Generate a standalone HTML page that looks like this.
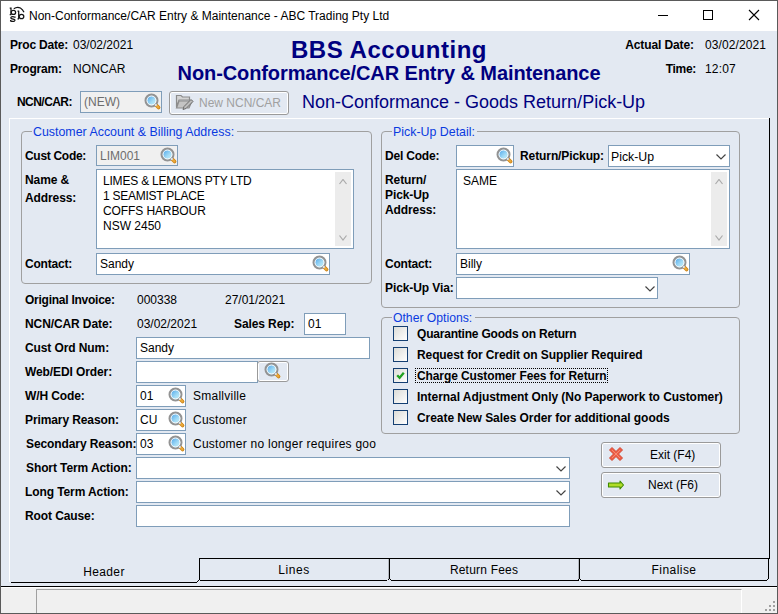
<!DOCTYPE html><html><head><meta charset="utf-8"><style>
html,body{margin:0;padding:0}
body{width:778px;height:614px;position:relative;overflow:hidden;background:#e3e9f2;font-family:"Liberation Sans",sans-serif}
.t{position:absolute;white-space:nowrap;line-height:1}
</style></head><body>
<div style="position:absolute;left:0px;top:0px;width:778px;height:31px;background:#fff"></div>
<svg style="position:absolute;left:0;top:0" width="30" height="30" viewBox="0 0 30 30" fill="none" stroke="#141414" stroke-width="1.25">
<path d="M11 7.6 V14.6 M9.7 8 H11.4 M9.7 14.6 H11.4"/><ellipse cx="13.4" cy="12.4" rx="2.2" ry="2.1"/>
<path d="M15 17.3 Q13.2 16.3 11.6 16.8 Q10.1 17.6 11.5 18.7 L14 19.3 Q15.7 20.2 14.4 21.1 Q12.4 21.9 10.6 20.9 M15 16.4 V17.8 M10.6 20 V21.5"/>
<path d="M18.7 10.8 V18.8 M17.5 11 H19.1 M17.5 18.8 H19.1"/><ellipse cx="21.5" cy="16.5" rx="2.3" ry="2.2"/>
<path d="M13.8 8.8 Q17 6.4 20.4 8 Q22.8 9.4 24 12.3"/>
</svg>
<div class="t" style="left:29px;top:10px;font-size:12px;font-weight:normal;color:#000;">Non-Conformance/CAR Entry &amp; Maintenance - ABC Trading Pty Ltd</div>
<div style="position:absolute;left:658px;top:15px;width:10px;height:1px;background:#000"></div>
<div style="position:absolute;left:703px;top:10px;width:8px;height:8px;border:1px solid #000"></div>
<svg style="position:absolute;left:748px;top:9px" width="12" height="12" viewBox="0 0 12 12"><path d="M1 1 L11 11 M11 1 L1 11" stroke="#000" stroke-width="1.1"/></svg>
<div class="t" style="left:10px;top:39px;font-size:12px;font-weight:bold;color:#000;letter-spacing:-0.2px;">Proc Date:</div>
<div class="t" style="left:73px;top:39px;font-size:12px;font-weight:normal;color:#000;">03/02/2021</div>
<div class="t" style="left:10px;top:63px;font-size:12px;font-weight:bold;color:#000;letter-spacing:-0.2px;">Program:</div>
<div class="t" style="left:73px;top:63px;font-size:12px;font-weight:normal;color:#000;letter-spacing:0.1px;">NONCAR</div>
<div class="t" style="left:89px;width:600px;text-align:center;top:38px;font-size:24px;font-weight:bold;color:#000080;letter-spacing:0.55px;">BBS Accounting</div>
<div class="t" style="left:89px;width:600px;text-align:center;top:63px;font-size:20px;font-weight:bold;color:#000080;letter-spacing:-0.1px;">Non-Conformance/CAR Entry &amp; Maintenance</div>
<div class="t" style="right:84px;top:39px;font-size:12px;font-weight:bold;color:#000;letter-spacing:-0.1px;">Actual Date:</div>
<div class="t" style="left:705px;top:39px;font-size:12px;font-weight:normal;color:#000;letter-spacing:0.1px;">03/02/2021</div>
<div class="t" style="right:82px;top:63px;font-size:12px;font-weight:bold;color:#000;letter-spacing:-0.3px;">Time:</div>
<div class="t" style="left:705px;top:63px;font-size:12px;font-weight:normal;color:#000;letter-spacing:0.15px;">12:07</div>
<div class="t" style="left:17px;top:96px;font-size:12px;font-weight:bold;color:#000;letter-spacing:-0.55px;">NCN/CAR:</div>
<div style="position:absolute;left:80px;top:91px;width:80px;height:20px;border:1px solid #7f9db9;background:#f0f0f0"></div>
<div class="t" style="left:84px;top:96px;font-size:12px;font-weight:normal;color:#6d6d6d;">(NEW)</div>
<svg style="position:absolute;left:144px;top:93px" width="18" height="18" viewBox="0 0 18 18">
<defs><linearGradient id="lg144_93" x1="0.1" y1="0.1" x2="0.9" y2="0.9"><stop offset="0" stop-color="#4aa4ea"/><stop offset="0.6" stop-color="#a4dcf6"/><stop offset="1" stop-color="#c4f2fc"/></linearGradient></defs>
<path d="M11.8 11.8 L14.6 14.6" stroke="#c98218" stroke-width="3.6" stroke-linecap="round"/>
<path d="M12 12 L14.4 14.4" stroke="#eba838" stroke-width="2.2" stroke-linecap="round"/>
<circle cx="7.5" cy="7.5" r="5.9" fill="url(#lg144_93)" stroke="#939393" stroke-width="2.2"/>
<circle cx="7.5" cy="7.5" r="4.5" fill="none" stroke="#fbfbfb" stroke-width="1"/>
<circle cx="11.9" cy="11.9" r="1" fill="#e8eef4"/>
</svg>
<div style="position:absolute;left:169px;top:91px;width:116px;height:20px;border:1px solid #9a9a9a;border-radius:3px;box-shadow:inset 0 0 0 1px #fff;padding:1px"></div>
<svg style="position:absolute;left:175px;top:94px" width="19" height="17" viewBox="0 0 19 17">
<path d="M1.5 1.5 L6 1.5 L7.5 3 L14.5 3 L14.5 6 L4 6 L1.5 13 Z" fill="#d4d4d4" stroke="#8c8c8c" stroke-width="1.2"/>
<path d="M1.5 14 L4 7 L17 7 L14 14 Z" fill="#c4c4c4" stroke="#8c8c8c" stroke-width="1.2"/>
<path d="M8 15.5 L9 12.5 L16 5.5 L18 7.5 L11 14.5 Z" fill="#bdbdbd" stroke="#6c6c6c" stroke-width="1"/>
</svg>
<div class="t" style="left:199px;top:97px;font-size:12px;font-weight:normal;color:#a0a0a0;">New NCN/CAR</div>
<div class="t" style="left:302px;top:93px;font-size:18px;font-weight:normal;color:#000080;">Non-Conformance - Goods Return/Pick-Up</div>
<div style="position:absolute;left:9px;top:118px;width:760px;height:1px;background:#fff"></div>
<div style="position:absolute;left:9px;top:118px;width:1px;height:464px;background:#fff"></div>
<div style="position:absolute;left:769px;top:118px;width:1px;height:441px;background:#000"></div>
<div style="position:absolute;left:199px;top:558px;width:571px;height:1px;background:#000"></div>
<div style="position:absolute;left:21px;top:131px;width:349px;height:151px;border:1px solid #a0a0a0;border-radius:4px"></div>
<div style="position:absolute;left:32px;top:129px;width:205px;height:5px;background:#e3e9f2"></div>
<div class="t" style="left:33px;top:126px;font-size:12.4px;font-weight:normal;color:#0a3ae0;">Customer Account &amp; Billing Address:</div>
<div class="t" style="left:25px;top:150px;font-size:12px;font-weight:bold;color:#000;letter-spacing:-0.3px;">Cust Code:</div>
<div style="position:absolute;left:96px;top:145px;width:80px;height:19px;border:1px solid #7f9db9;background:#f0f0f0"></div>
<div class="t" style="left:100px;top:150px;font-size:12px;font-weight:normal;color:#6d6d6d;">LIM001</div>
<svg style="position:absolute;left:160px;top:147px" width="18" height="18" viewBox="0 0 18 18">
<defs><linearGradient id="lg160_147" x1="0.1" y1="0.1" x2="0.9" y2="0.9"><stop offset="0" stop-color="#4aa4ea"/><stop offset="0.6" stop-color="#a4dcf6"/><stop offset="1" stop-color="#c4f2fc"/></linearGradient></defs>
<path d="M11.8 11.8 L14.6 14.6" stroke="#c98218" stroke-width="3.6" stroke-linecap="round"/>
<path d="M12 12 L14.4 14.4" stroke="#eba838" stroke-width="2.2" stroke-linecap="round"/>
<circle cx="7.5" cy="7.5" r="5.9" fill="url(#lg160_147)" stroke="#939393" stroke-width="2.2"/>
<circle cx="7.5" cy="7.5" r="4.5" fill="none" stroke="#fbfbfb" stroke-width="1"/>
<circle cx="11.9" cy="11.9" r="1" fill="#e8eef4"/>
</svg>
<div class="t" style="left:25px;top:174px;font-size:12px;font-weight:bold;color:#000;letter-spacing:-0.1px;">Name &amp;</div>
<div class="t" style="left:25px;top:192px;font-size:12px;font-weight:bold;color:#000;letter-spacing:-0.1px;">Address:</div>
<div style="position:absolute;left:96px;top:169px;width:256px;height:78px;border:1px solid #7f9db9;background:#fff"></div>
<div style="position:absolute;left:335px;top:172px;width:16px;height:74px;background:#ececec"></div>
<svg style="position:absolute;left:339px;top:179px" width="8" height="6" viewBox="0 0 8 6"><path d="M0.5 5 L4.0 0.5 L7.5 5" fill="none" stroke="#aaaaaa" stroke-width="1.2"/></svg>
<svg style="position:absolute;left:339px;top:235px" width="8" height="6" viewBox="0 0 8 6"><path d="M0.5 0.5 L4.0 5 L7.5 0.5" fill="none" stroke="#aaaaaa" stroke-width="1.2"/></svg>
<div class="t" style="left:103px;top:175px;font-size:12px;font-weight:normal;color:#000;letter-spacing:-0.2px;">LIMES &amp; LEMONS PTY LTD</div>
<div class="t" style="left:103px;top:190px;font-size:12px;font-weight:normal;color:#000;letter-spacing:-0.25px;">1 SEAMIST PLACE</div>
<div class="t" style="left:103px;top:205px;font-size:12px;font-weight:normal;color:#000;letter-spacing:-0.1px;">COFFS HARBOUR</div>
<div class="t" style="left:103px;top:220px;font-size:12px;font-weight:normal;color:#000;">NSW 2450</div>
<div class="t" style="left:25px;top:258px;font-size:12px;font-weight:bold;color:#000;letter-spacing:-0.2px;">Contact:</div>
<div style="position:absolute;left:96px;top:253px;width:232px;height:20px;border:1px solid #7f9db9;background:#fff"></div>
<div class="t" style="left:100px;top:258px;font-size:12px;font-weight:normal;color:#000;">Sandy</div>
<svg style="position:absolute;left:312px;top:255px" width="18" height="18" viewBox="0 0 18 18">
<defs><linearGradient id="lg312_255" x1="0.1" y1="0.1" x2="0.9" y2="0.9"><stop offset="0" stop-color="#4aa4ea"/><stop offset="0.6" stop-color="#a4dcf6"/><stop offset="1" stop-color="#c4f2fc"/></linearGradient></defs>
<path d="M11.8 11.8 L14.6 14.6" stroke="#c98218" stroke-width="3.6" stroke-linecap="round"/>
<path d="M12 12 L14.4 14.4" stroke="#eba838" stroke-width="2.2" stroke-linecap="round"/>
<circle cx="7.5" cy="7.5" r="5.9" fill="url(#lg312_255)" stroke="#939393" stroke-width="2.2"/>
<circle cx="7.5" cy="7.5" r="4.5" fill="none" stroke="#fbfbfb" stroke-width="1"/>
<circle cx="11.9" cy="11.9" r="1" fill="#e8eef4"/>
</svg>
<div style="position:absolute;left:381px;top:131px;width:357px;height:175px;border:1px solid #a0a0a0;border-radius:4px"></div>
<div style="position:absolute;left:392px;top:129px;width:85px;height:5px;background:#e3e9f2"></div>
<div class="t" style="left:393px;top:126px;font-size:12.4px;font-weight:normal;color:#0a3ae0;">Pick-Up Detail:</div>
<div class="t" style="left:385px;top:150px;font-size:12px;font-weight:bold;color:#000;letter-spacing:-0.2px;">Del Code:</div>
<div style="position:absolute;left:456px;top:145px;width:56px;height:20px;border:1px solid #7f9db9;background:#fff"></div>
<svg style="position:absolute;left:496px;top:147px" width="18" height="18" viewBox="0 0 18 18">
<defs><linearGradient id="lg496_147" x1="0.1" y1="0.1" x2="0.9" y2="0.9"><stop offset="0" stop-color="#4aa4ea"/><stop offset="0.6" stop-color="#a4dcf6"/><stop offset="1" stop-color="#c4f2fc"/></linearGradient></defs>
<path d="M11.8 11.8 L14.6 14.6" stroke="#c98218" stroke-width="3.6" stroke-linecap="round"/>
<path d="M12 12 L14.4 14.4" stroke="#eba838" stroke-width="2.2" stroke-linecap="round"/>
<circle cx="7.5" cy="7.5" r="5.9" fill="url(#lg496_147)" stroke="#939393" stroke-width="2.2"/>
<circle cx="7.5" cy="7.5" r="4.5" fill="none" stroke="#fbfbfb" stroke-width="1"/>
<circle cx="11.9" cy="11.9" r="1" fill="#e8eef4"/>
</svg>
<div class="t" style="right:174px;top:150px;font-size:12px;font-weight:bold;color:#000;letter-spacing:-0.1px;">Return/Pickup:</div>
<div style="position:absolute;left:608px;top:145px;width:120px;height:20px;border:1px solid #7f9db9;background:#fff"></div>
<div class="t" style="left:611px;top:151px;font-size:12.3px;font-weight:normal;color:#000;">Pick-Up</div>
<svg style="position:absolute;left:716px;top:154px" width="10" height="6" viewBox="0 0 10 6"><path d="M0.5 0.5 L5.0 5 L9.5 0.5" fill="none" stroke="#444" stroke-width="1.2"/></svg>
<div class="t" style="left:385px;top:174px;font-size:12px;font-weight:bold;color:#000;letter-spacing:-0.1px;">Return/</div>
<div class="t" style="left:385px;top:189px;font-size:12px;font-weight:bold;color:#000;letter-spacing:-0.1px;">Pick-Up</div>
<div class="t" style="left:385px;top:204px;font-size:12px;font-weight:bold;color:#000;letter-spacing:-0.1px;">Address:</div>
<div style="position:absolute;left:456px;top:169px;width:272px;height:78px;border:1px solid #7f9db9;background:#fff"></div>
<div style="position:absolute;left:711px;top:172px;width:16px;height:74px;background:#ececec"></div>
<svg style="position:absolute;left:715px;top:179px" width="8" height="6" viewBox="0 0 8 6"><path d="M0.5 5 L4.0 0.5 L7.5 5" fill="none" stroke="#aaaaaa" stroke-width="1.2"/></svg>
<svg style="position:absolute;left:715px;top:235px" width="8" height="6" viewBox="0 0 8 6"><path d="M0.5 0.5 L4.0 5 L7.5 0.5" fill="none" stroke="#aaaaaa" stroke-width="1.2"/></svg>
<div class="t" style="left:463px;top:175px;font-size:12px;font-weight:normal;color:#000;">SAME</div>
<div class="t" style="left:385px;top:258px;font-size:12px;font-weight:bold;color:#000;letter-spacing:-0.2px;">Contact:</div>
<div style="position:absolute;left:456px;top:253px;width:232px;height:20px;border:1px solid #7f9db9;background:#fff"></div>
<div class="t" style="left:460px;top:258px;font-size:12px;font-weight:normal;color:#000;">Billy</div>
<svg style="position:absolute;left:672px;top:255px" width="18" height="18" viewBox="0 0 18 18">
<defs><linearGradient id="lg672_255" x1="0.1" y1="0.1" x2="0.9" y2="0.9"><stop offset="0" stop-color="#4aa4ea"/><stop offset="0.6" stop-color="#a4dcf6"/><stop offset="1" stop-color="#c4f2fc"/></linearGradient></defs>
<path d="M11.8 11.8 L14.6 14.6" stroke="#c98218" stroke-width="3.6" stroke-linecap="round"/>
<path d="M12 12 L14.4 14.4" stroke="#eba838" stroke-width="2.2" stroke-linecap="round"/>
<circle cx="7.5" cy="7.5" r="5.9" fill="url(#lg672_255)" stroke="#939393" stroke-width="2.2"/>
<circle cx="7.5" cy="7.5" r="4.5" fill="none" stroke="#fbfbfb" stroke-width="1"/>
<circle cx="11.9" cy="11.9" r="1" fill="#e8eef4"/>
</svg>
<div class="t" style="left:385px;top:282px;font-size:12px;font-weight:bold;color:#000;letter-spacing:-0.1px;">Pick-Up Via:</div>
<div style="position:absolute;left:456px;top:277px;width:200px;height:20px;border:1px solid #7f9db9;background:#fff"></div>
<svg style="position:absolute;left:645px;top:286px" width="10" height="6" viewBox="0 0 10 6"><path d="M0.5 0.5 L5.0 5 L9.5 0.5" fill="none" stroke="#444" stroke-width="1.2"/></svg>
<div style="position:absolute;left:381px;top:317px;width:357px;height:115px;border:1px solid #a0a0a0;border-radius:4px"></div>
<div style="position:absolute;left:392px;top:315px;width:83px;height:5px;background:#e3e9f2"></div>
<div class="t" style="left:393px;top:312px;font-size:12.2px;font-weight:normal;color:#0a3ae0;">Other Options:</div>
<div style="position:absolute;left:393px;top:326px;width:13px;height:13px;border:1px solid #143f72;background:linear-gradient(135deg,#dcdcd7,#ffffff)"></div>
<div class="t" style="left:417px;top:328px;font-size:12px;font-weight:bold;color:#000;letter-spacing:-0.2px;">Quarantine Goods on Return</div>
<div style="position:absolute;left:393px;top:347px;width:13px;height:13px;border:1px solid #143f72;background:linear-gradient(135deg,#dcdcd7,#ffffff)"></div>
<div class="t" style="left:417px;top:349px;font-size:12px;font-weight:bold;color:#000;letter-spacing:-0.1px;">Request for Credit on Supplier Required</div>
<div style="position:absolute;left:393px;top:368px;width:13px;height:13px;border:1px solid #143f72;background:linear-gradient(135deg,#dcdcd7,#ffffff)"></div>
<svg style="position:absolute;left:393px;top:368px" width="15" height="15" viewBox="0 0 15 15"><path d="M4.2 7.3 L6.6 9.8 L10.8 4.8" fill="none" stroke="#21a121" stroke-width="2.3"/></svg>
<div class="t" style="left:417px;top:370px;font-size:12px;font-weight:bold;color:#000;letter-spacing:-0.1px;">Charge Customer Fees for Return</div>
<div style="position:absolute;left:393px;top:389px;width:13px;height:13px;border:1px solid #143f72;background:linear-gradient(135deg,#dcdcd7,#ffffff)"></div>
<div class="t" style="left:417px;top:391px;font-size:12px;font-weight:bold;color:#000;letter-spacing:-0.05px;">Internal Adjustment Only (No Paperwork to Customer)</div>
<div style="position:absolute;left:393px;top:410px;width:13px;height:13px;border:1px solid #143f72;background:linear-gradient(135deg,#dcdcd7,#ffffff)"></div>
<div class="t" style="left:417px;top:412px;font-size:12px;font-weight:bold;color:#000;letter-spacing:-0.05px;">Create New Sales Order for additional goods</div>
<div style="position:absolute;left:415px;top:368px;width:191px;height:13px;border:1px dotted #000"></div>
<div class="t" style="left:25px;top:294px;font-size:12px;font-weight:bold;color:#000;letter-spacing:-0.25px;">Original Invoice:</div>
<div class="t" style="left:137px;top:294px;font-size:12px;font-weight:normal;color:#000;">000338</div>
<div class="t" style="left:225px;top:294px;font-size:12px;font-weight:normal;color:#000;">27/01/2021</div>
<div class="t" style="left:25px;top:318px;font-size:12px;font-weight:bold;color:#000;letter-spacing:-0.1px;">NCN/CAR Date:</div>
<div class="t" style="left:137px;top:318px;font-size:12px;font-weight:normal;color:#000;">03/02/2021</div>
<div class="t" style="left:234px;top:318px;font-size:12px;font-weight:bold;color:#000;letter-spacing:-0.1px;">Sales Rep:</div>
<div style="position:absolute;left:304px;top:313px;width:40px;height:20px;border:1px solid #7f9db9;background:#fff"></div>
<div class="t" style="left:308px;top:318px;font-size:12px;font-weight:normal;color:#000;">01</div>
<div class="t" style="left:25px;top:342px;font-size:12px;font-weight:bold;color:#000;letter-spacing:-0.1px;">Cust Ord Num:</div>
<div style="position:absolute;left:136px;top:337px;width:232px;height:20px;border:1px solid #7f9db9;background:#fff"></div>
<div class="t" style="left:140px;top:342px;font-size:12px;font-weight:normal;color:#000;">Sandy</div>
<div class="t" style="left:25px;top:366px;font-size:12px;font-weight:bold;color:#000;letter-spacing:-0.1px;">Web/EDI Order:</div>
<div style="position:absolute;left:136px;top:361px;width:120px;height:20px;border:1px solid #7f9db9;background:#fff"></div>
<div style="position:absolute;left:257px;top:361px;width:28px;height:17px;border:1px solid #9a9a9a;border-radius:3px;box-shadow:inset 0 0 0 1px #fff;padding:1px"></div>
<svg style="position:absolute;left:264px;top:362px" width="18" height="18" viewBox="0 0 18 18">
<defs><linearGradient id="lg264_362" x1="0.1" y1="0.1" x2="0.9" y2="0.9"><stop offset="0" stop-color="#4aa4ea"/><stop offset="0.6" stop-color="#a4dcf6"/><stop offset="1" stop-color="#c4f2fc"/></linearGradient></defs>
<path d="M11.8 11.8 L14.6 14.6" stroke="#c98218" stroke-width="3.6" stroke-linecap="round"/>
<path d="M12 12 L14.4 14.4" stroke="#eba838" stroke-width="2.2" stroke-linecap="round"/>
<circle cx="7.5" cy="7.5" r="5.9" fill="url(#lg264_362)" stroke="#939393" stroke-width="2.2"/>
<circle cx="7.5" cy="7.5" r="4.5" fill="none" stroke="#fbfbfb" stroke-width="1"/>
<circle cx="11.9" cy="11.9" r="1" fill="#e8eef4"/>
</svg>
<div class="t" style="left:25px;top:390px;font-size:12px;font-weight:bold;color:#000;letter-spacing:-0.1px;">W/H Code:</div>
<div style="position:absolute;left:136px;top:385px;width:48px;height:20px;border:1px solid #7f9db9;background:#fff"></div>
<div class="t" style="left:140px;top:390px;font-size:12px;font-weight:normal;color:#000;">01</div>
<svg style="position:absolute;left:168px;top:387px" width="18" height="18" viewBox="0 0 18 18">
<defs><linearGradient id="lg168_387" x1="0.1" y1="0.1" x2="0.9" y2="0.9"><stop offset="0" stop-color="#4aa4ea"/><stop offset="0.6" stop-color="#a4dcf6"/><stop offset="1" stop-color="#c4f2fc"/></linearGradient></defs>
<path d="M11.8 11.8 L14.6 14.6" stroke="#c98218" stroke-width="3.6" stroke-linecap="round"/>
<path d="M12 12 L14.4 14.4" stroke="#eba838" stroke-width="2.2" stroke-linecap="round"/>
<circle cx="7.5" cy="7.5" r="5.9" fill="url(#lg168_387)" stroke="#939393" stroke-width="2.2"/>
<circle cx="7.5" cy="7.5" r="4.5" fill="none" stroke="#fbfbfb" stroke-width="1"/>
<circle cx="11.9" cy="11.9" r="1" fill="#e8eef4"/>
</svg>
<div class="t" style="left:193px;top:390px;font-size:12px;font-weight:normal;color:#000;letter-spacing:0.25px;">Smallville</div>
<div class="t" style="left:25px;top:414px;font-size:12px;font-weight:bold;color:#000;letter-spacing:-0.1px;">Primary Reason:</div>
<div style="position:absolute;left:136px;top:409px;width:48px;height:20px;border:1px solid #7f9db9;background:#fff"></div>
<div class="t" style="left:140px;top:414px;font-size:12px;font-weight:normal;color:#000;">CU</div>
<svg style="position:absolute;left:168px;top:411px" width="18" height="18" viewBox="0 0 18 18">
<defs><linearGradient id="lg168_411" x1="0.1" y1="0.1" x2="0.9" y2="0.9"><stop offset="0" stop-color="#4aa4ea"/><stop offset="0.6" stop-color="#a4dcf6"/><stop offset="1" stop-color="#c4f2fc"/></linearGradient></defs>
<path d="M11.8 11.8 L14.6 14.6" stroke="#c98218" stroke-width="3.6" stroke-linecap="round"/>
<path d="M12 12 L14.4 14.4" stroke="#eba838" stroke-width="2.2" stroke-linecap="round"/>
<circle cx="7.5" cy="7.5" r="5.9" fill="url(#lg168_411)" stroke="#939393" stroke-width="2.2"/>
<circle cx="7.5" cy="7.5" r="4.5" fill="none" stroke="#fbfbfb" stroke-width="1"/>
<circle cx="11.9" cy="11.9" r="1" fill="#e8eef4"/>
</svg>
<div class="t" style="left:193px;top:414px;font-size:12px;font-weight:normal;color:#000;letter-spacing:0.25px;">Customer</div>
<div class="t" style="left:26px;top:438px;font-size:12px;font-weight:bold;color:#000;letter-spacing:-0.1px;">Secondary Reason:</div>
<div style="position:absolute;left:136px;top:433px;width:48px;height:20px;border:1px solid #7f9db9;background:#fff"></div>
<div class="t" style="left:140px;top:438px;font-size:12px;font-weight:normal;color:#000;">03</div>
<svg style="position:absolute;left:168px;top:435px" width="18" height="18" viewBox="0 0 18 18">
<defs><linearGradient id="lg168_435" x1="0.1" y1="0.1" x2="0.9" y2="0.9"><stop offset="0" stop-color="#4aa4ea"/><stop offset="0.6" stop-color="#a4dcf6"/><stop offset="1" stop-color="#c4f2fc"/></linearGradient></defs>
<path d="M11.8 11.8 L14.6 14.6" stroke="#c98218" stroke-width="3.6" stroke-linecap="round"/>
<path d="M12 12 L14.4 14.4" stroke="#eba838" stroke-width="2.2" stroke-linecap="round"/>
<circle cx="7.5" cy="7.5" r="5.9" fill="url(#lg168_435)" stroke="#939393" stroke-width="2.2"/>
<circle cx="7.5" cy="7.5" r="4.5" fill="none" stroke="#fbfbfb" stroke-width="1"/>
<circle cx="11.9" cy="11.9" r="1" fill="#e8eef4"/>
</svg>
<div class="t" style="left:193px;top:438px;font-size:12px;font-weight:normal;color:#000;letter-spacing:0.25px;">Customer no longer requires goo</div>
<div class="t" style="left:26px;top:462px;font-size:12px;font-weight:bold;color:#000;letter-spacing:-0.1px;">Short Term Action:</div>
<div style="position:absolute;left:136px;top:457px;width:432px;height:20px;border:1px solid #7f9db9;background:#fff"></div>
<svg style="position:absolute;left:556px;top:466px" width="10" height="6" viewBox="0 0 10 6"><path d="M0.5 0.5 L5.0 5 L9.5 0.5" fill="none" stroke="#444" stroke-width="1.2"/></svg>
<div class="t" style="left:25px;top:486px;font-size:12px;font-weight:bold;color:#000;letter-spacing:-0.1px;">Long Term Action:</div>
<div style="position:absolute;left:136px;top:481px;width:432px;height:20px;border:1px solid #7f9db9;background:#fff"></div>
<svg style="position:absolute;left:556px;top:490px" width="10" height="6" viewBox="0 0 10 6"><path d="M0.5 0.5 L5.0 5 L9.5 0.5" fill="none" stroke="#444" stroke-width="1.2"/></svg>
<div class="t" style="left:25px;top:510px;font-size:12px;font-weight:bold;color:#000;letter-spacing:-0.1px;">Root Cause:</div>
<div style="position:absolute;left:136px;top:505px;width:432px;height:20px;border:1px solid #7f9db9;background:#fff"></div>
<div style="position:absolute;left:601px;top:442px;width:116px;height:22px;border:1px solid #9a9a9a;border-radius:3px;box-shadow:inset 0 0 0 1px #fff;padding:1px"></div>
<svg style="position:absolute;left:608px;top:446px" width="16" height="16" viewBox="0 0 16 16"><path d="M1.5 4 L4 1.5 L8 5.5 L12 1.5 L14.5 4 L10.5 8 L14.5 12 L12 14.5 L8 10.5 L4 14.5 L1.5 12 L5.5 8 Z" fill="#ef5c45" stroke="#d24a34" stroke-width="1"/><path d="M4 4 L12 12 M12 4 L4 12" stroke="#f68a72" stroke-width="1"/></svg>
<div class="t" style="left:650px;top:449px;font-size:12px;font-weight:normal;color:#000;">Exit (F4)</div>
<div style="position:absolute;left:601px;top:472px;width:116px;height:22px;border:1px solid #9a9a9a;border-radius:3px;box-shadow:inset 0 0 0 1px #fff;padding:1px"></div>
<svg style="position:absolute;left:607px;top:479px" width="18" height="12" viewBox="0 0 18 12"><path d="M1.5 4 L13 4 L13 2 L16.5 6 L13 10 L13 8 L1.5 8 Z" fill="#b0dc28" stroke="#3f8a00" stroke-width="1.1" stroke-linejoin="round"/></svg>
<div class="t" style="left:648px;top:479px;font-size:12px;font-weight:normal;color:#000;">Next (F6)</div>
<div style="position:absolute;left:11px;top:582px;width:186px;height:1px;background:#000"></div>
<div style="position:absolute;left:197px;top:581px;width:1px;height:1px;background:#000"></div>
<div style="position:absolute;left:198px;top:580px;width:1px;height:1px;background:#000"></div>
<div style="position:absolute;left:199px;top:558px;width:1px;height:22px;background:#000"></div>
<div style="position:absolute;left:200px;top:580px;width:187px;height:1px;background:#000"></div>
<div style="position:absolute;left:389px;top:558px;width:1px;height:21px;background:#000"></div>
<div style="position:absolute;left:388px;top:559px;width:1px;height:20px;background:#b4b8c0"></div>
<div style="position:absolute;left:388px;top:579px;width:1px;height:1px;background:#000"></div>
<div style="position:absolute;left:390px;top:579px;width:1px;height:1px;background:#000"></div>
<div style="position:absolute;left:391px;top:580px;width:188px;height:1px;background:#000"></div>
<div style="position:absolute;left:579px;top:558px;width:1px;height:21px;background:#000"></div>
<div style="position:absolute;left:578px;top:559px;width:1px;height:20px;background:#b4b8c0"></div>
<div style="position:absolute;left:578px;top:579px;width:1px;height:1px;background:#000"></div>
<div style="position:absolute;left:580px;top:579px;width:1px;height:1px;background:#000"></div>
<div style="position:absolute;left:581px;top:580px;width:186px;height:1px;background:#000"></div>
<div style="position:absolute;left:768px;top:559px;width:1px;height:20px;background:#000"></div>
<div style="position:absolute;left:767px;top:579px;width:1px;height:1px;background:#000"></div>
<div class="t" style="left:-196px;width:600px;text-align:center;top:566px;font-size:12px;font-weight:normal;color:#000;letter-spacing:0.35px;">Header</div>
<div class="t" style="left:-6px;width:600px;text-align:center;top:564px;font-size:12px;font-weight:normal;color:#000;letter-spacing:0.6px;">Lines</div>
<div class="t" style="left:184px;width:600px;text-align:center;top:564px;font-size:12px;font-weight:normal;color:#000;letter-spacing:0.2px;">Return Fees</div>
<div class="t" style="left:374px;width:600px;text-align:center;top:564px;font-size:12px;font-weight:normal;color:#000;letter-spacing:0.45px;">Finalise</div>
<div style="position:absolute;left:1px;top:586px;width:776px;height:1px;background:#000"></div>
<div style="position:absolute;left:1px;top:587px;width:776px;height:26px;background:#f0f0f0;border-top:1px solid #fff"></div>
<div style="position:absolute;left:36px;top:589px;width:704px;height:24px;border-left:1px solid #a0a0a0;border-top:1px solid #a0a0a0;border-right:1px solid #fff"></div>
<div style="position:absolute;left:773px;top:601px;width:2px;height:2px;background:#a0a0a0"></div>
<div style="position:absolute;left:769px;top:605px;width:2px;height:2px;background:#a0a0a0"></div>
<div style="position:absolute;left:773px;top:605px;width:2px;height:2px;background:#a0a0a0"></div>
<div style="position:absolute;left:765px;top:609px;width:2px;height:2px;background:#a0a0a0"></div>
<div style="position:absolute;left:769px;top:609px;width:2px;height:2px;background:#a0a0a0"></div>
<div style="position:absolute;left:773px;top:609px;width:2px;height:2px;background:#a0a0a0"></div>
<div style="position:absolute;left:0;top:0;width:776px;height:612px;border:1px solid #5a5a5a"></div>
</body></html>
